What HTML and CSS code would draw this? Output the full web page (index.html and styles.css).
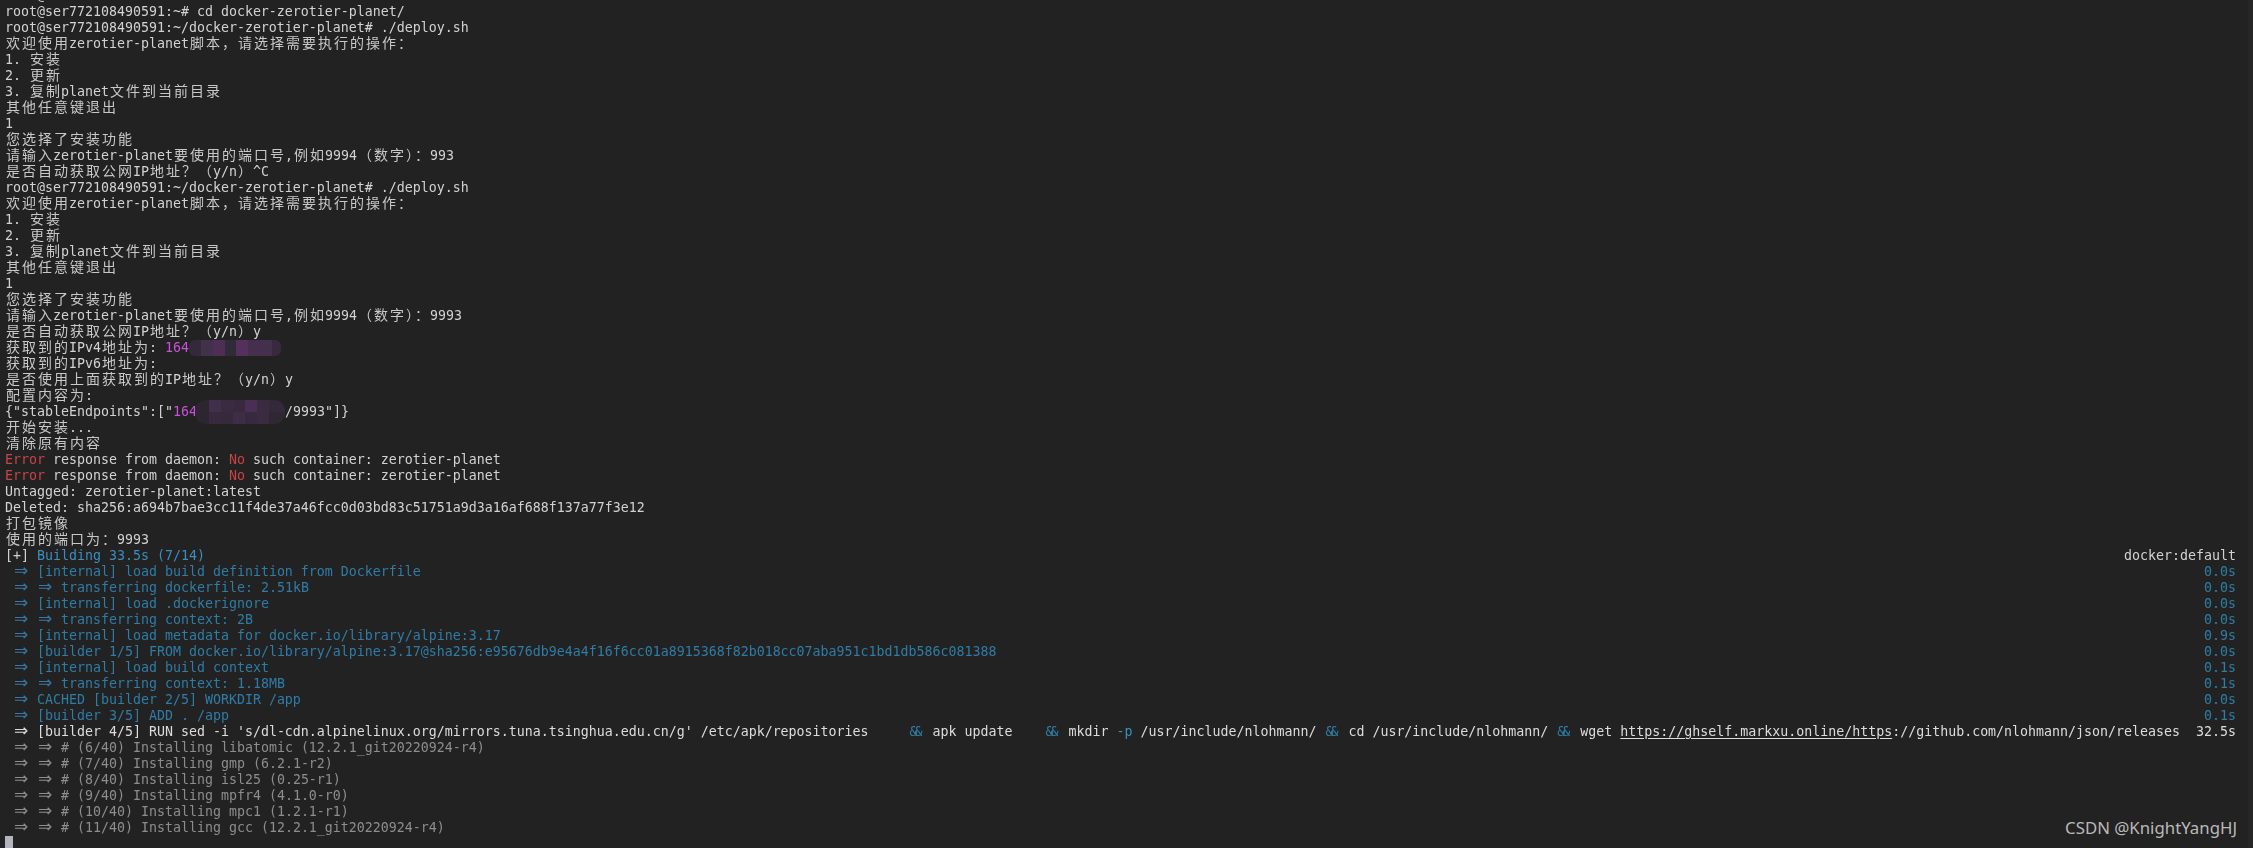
FILE: index.html
```html
<!DOCTYPE html>
<html lang="zh-CN">
<head>
<meta charset="utf-8">
<title>deploy.sh</title>
<link rel="stylesheet" href="styles.css">
</head>
<body>
<main class="term">
<div class="l">root@ser772108490591:~# ls</div>
<div class="l">root@ser772108490591:~# cd docker-zerotier-planet/</div>
<div class="l">root@ser772108490591:~/docker-zerotier-planet# ./deploy.sh</div>
<div class="l"><i class="c">欢迎使用</i>zerotier-planet<i class="c">脚本，请选择需要执行的操作：</i></div>
<div class="l">1. <i class="c">安装</i></div>
<div class="l">2. <i class="c">更新</i></div>
<div class="l">3. <i class="c">复制</i>planet<i class="c">文件到当前目录</i></div>
<div class="l"><i class="c">其他任意键退出</i></div>
<div class="l">1</div>
<div class="l"><i class="c">您选择了安装功能</i></div>
<div class="l"><i class="c">请输入</i>zerotier-planet<i class="c">要使用的端口号</i>,<i class="c">例如</i>9994<i class="c">（数字）：</i>993</div>
<div class="l"><i class="c">是否自动获取公网</i>IP<i class="c">地址？（</i>y/n<i class="c">）</i>^C</div>
<div class="l">root@ser772108490591:~/docker-zerotier-planet# ./deploy.sh</div>
<div class="l"><i class="c">欢迎使用</i>zerotier-planet<i class="c">脚本，请选择需要执行的操作：</i></div>
<div class="l">1. <i class="c">安装</i></div>
<div class="l">2. <i class="c">更新</i></div>
<div class="l">3. <i class="c">复制</i>planet<i class="c">文件到当前目录</i></div>
<div class="l"><i class="c">其他任意键退出</i></div>
<div class="l">1</div>
<div class="l"><i class="c">您选择了安装功能</i></div>
<div class="l"><i class="c">请输入</i>zerotier-planet<i class="c">要使用的端口号</i>,<i class="c">例如</i>9994<i class="c">（数字）：</i>9993</div>
<div class="l"><i class="c">是否自动获取公网</i>IP<i class="c">地址？（</i>y/n<i class="c">）</i>y</div>
<div class="l"><i class="c">获取到的</i>IPv4<i class="c">地址为</i>: <span class="p">164</span><span class="ip"><span class="mosaic m1"></span></span></div>
<div class="l"><i class="c">获取到的</i>IPv6<i class="c">地址为</i>:</div>
<div class="l"><i class="c">是否使用上面获取到的</i>IP<i class="c">地址？（</i>y/n<i class="c">）</i>y</div>
<div class="l"><i class="c">配置内容为</i>:</div>
<div class="l">{"stableEndpoints":["<span class="p">164</span><span class="ip"><span class="mosaic m2"></span></span>/9993"]}</div>
<div class="l"><i class="c">开始安装</i>...</div>
<div class="l"><i class="c">清除原有内容</i></div>
<div class="l"><span class="r">Error</span> response from daemon: <span class="r">No</span> such container: zerotier-planet</div>
<div class="l"><span class="r">Error</span> response from daemon: <span class="r">No</span> such container: zerotier-planet</div>
<div class="l">Untagged: zerotier-planet:latest</div>
<div class="l">Deleted: sha256:a694b7bae3cc11f4de37a46fcc0d03bd83c51751a9d3a16af688f137a77f3e12</div>
<div class="l"><i class="c">打包镜像</i></div>
<div class="l"><i class="c">使用的端口为：</i>9993</div>
<div class="l row"><span>[+] <span class="b">Building 33.5s (7/14)</span></span><span>docker:default</span></div>
<div class="l row b"><span> <b class="a">⇒</b> [internal] load build definition from Dockerfile</span><span>0.0s</span></div>
<div class="l row b"><span> <b class="a">⇒</b> <b class="a">⇒</b> transferring dockerfile: 2.51kB</span><span>0.0s</span></div>
<div class="l row b"><span> <b class="a">⇒</b> [internal] load .dockerignore</span><span>0.0s</span></div>
<div class="l row b"><span> <b class="a">⇒</b> <b class="a">⇒</b> transferring context: 2B</span><span>0.0s</span></div>
<div class="l row b"><span> <b class="a">⇒</b> [internal] load metadata for docker.io/library/alpine:3.17</span><span>0.9s</span></div>
<div class="l row b"><span> <b class="a">⇒</b> [builder 1/5] FROM docker.io/library/alpine:3.17@sha256:e95676db9e4a4f16f6cc01a8915368f82b018cc07aba951c1bd1db586c081388</span><span>0.0s</span></div>
<div class="l row b"><span> <b class="a">⇒</b> [internal] load build context</span><span>0.1s</span></div>
<div class="l row b"><span> <b class="a">⇒</b> <b class="a">⇒</b> transferring context: 1.18MB</span><span>0.1s</span></div>
<div class="l row b"><span> <b class="a">⇒</b> CACHED [builder 2/5] WORKDIR /app</span><span>0.0s</span></div>
<div class="l row b"><span> <b class="a">⇒</b> [builder 3/5] ADD . /app</span><span>0.1s</span></div>
<div class="l row w"><span> <b class="a">⇒</b> [builder 4/5] RUN sed -i 's/dl-cdn.alpinelinux.org/mirrors.tuna.tsinghua.edu.cn/g' /etc/apk/repositories     <b class="amp">&amp;&amp;</b> apk update    <b class="amp">&amp;&amp;</b> mkdir <span class="b2">-p</span> /usr/include/nlohmann/ <b class="amp">&amp;&amp;</b> cd /usr/include/nlohmann/ <b class="amp">&amp;&amp;</b> wget <u>https://ghself.markxu.online/https</u>://github.com/nlohmann/json/releases</span><span>32.5s</span></div>
<div class="l g"> <b class="a">⇒</b> <b class="a">⇒</b> # (6/40) Installing libatomic (12.2.1_git20220924-r4)</div>
<div class="l g"> <b class="a">⇒</b> <b class="a">⇒</b> # (7/40) Installing gmp (6.2.1-r2)</div>
<div class="l g"> <b class="a">⇒</b> <b class="a">⇒</b> # (8/40) Installing isl25 (0.25-r1)</div>
<div class="l g"> <b class="a">⇒</b> <b class="a">⇒</b> # (9/40) Installing mpfr4 (4.1.0-r0)</div>
<div class="l g"> <b class="a">⇒</b> <b class="a">⇒</b> # (10/40) Installing mpc1 (1.2.1-r1)</div>
<div class="l g"> <b class="a">⇒</b> <b class="a">⇒</b> # (11/40) Installing gcc (12.2.1_git20220924-r4)</div>
<div class="l"><span class="cursor"></span></div>
</main>
<div class="mark">CSDN @KnightYangHJ</div>
</body>
</html>
```
FILE: styles.css
```css
html, body {
  margin: 0;
  height: 848px;
  overflow: hidden;
  background: #222222;
}
body {
  position: relative;
  border-right: 5px solid #262626;
  box-sizing: border-box;
}
.term {
  margin-top: -12px;
  padding: 0 12px 0 5px;
  font-family: "DejaVu Sans Mono", "Liberation Mono", "Noto Sans CJK SC", monospace;
  font-size: 13.29px;
  line-height: 16px;
  color: #d2d2d2;
  filter: blur(0.35px);
}
.l {
  height: 16px;
  white-space: pre;
}
.row {
  display: flex;
  justify-content: space-between;
}
.c {
  font-family: "Noto Sans CJK SC", sans-serif;
  font-style: normal;
  font-size: 14px;
  letter-spacing: 2px;
  padding-left: 1px;
  margin-right: -1px;
  line-height: 0;
  color: #c8c8c8;
}
.p { color: #cb4fdc; }
.r { color: #c94444; }
.b { color: #2f7ca6; }
.l.row > span > .b { color: #3a8fbd; }
.b2 { color: #3a8fbd; }
.w { color: #dcdcdc; }
.g { color: #8d8d8d; }
.a {
  display: inline-block;
  width: 16px;
  text-align: center;
  font-family: "DejaVu Sans", sans-serif;
  font-weight: normal;
  font-size: 17px;
  line-height: 0;
}
.amp {
  display: inline-block;
  width: 16px;
  padding-left: 1px;
  box-sizing: border-box;
  font-weight: normal;
  letter-spacing: -3px;
  color: #2f7ca6;
}
u { text-underline-offset: 2px; }
.ip {
  display: inline-block;
  position: relative;
  width: 88px;
  height: 16px;
  vertical-align: top;
}
.mosaic {
  position: absolute;
  display: block;
}
.m1 {
  left: 0;
  top: 0;
  width: 92px;
  height: 16px;
  border-radius: 6px;
  background: linear-gradient(90deg,
    #34293a 0 12px, #43304b 12px 24px, #4d2f55 24px 36px, #312a38 36px 47px,
    #55305d 47px 59px, #462e4e 59px 71px, #43304b 71px 83px, #38293e 83px 92px);
}
.m2 {
  left: -2px;
  top: -4px;
  width: 90px;
  height: 24px;
  border-radius: 11px;
  background:
    linear-gradient(90deg,
      #2c2630 0 14px, #41304a 14px 26px, #3a2b41 26px 38px, #38293e 38px 50px,
      #4a2f54 50px 62px, #3a2b41 62px 74px, #34293a 74px 90px) top / 100% 12px no-repeat,
    linear-gradient(90deg,
      #2c2630 0 14px, #38293e 14px 26px, #36293c 26px 38px, #3f2d47 38px 50px,
      #38293e 50px 62px, #3a2b41 62px 74px, #2f2833 74px 90px) bottom / 100% 12px no-repeat;
}
.cursor {
  display: block;
  width: 8px;
  height: 16px;
  background: #b4b4bc;
}
.mark {
  position: absolute;
  right: 11px;
  top: 816px;
  font-family: "Noto Sans", "Liberation Sans", sans-serif;
  font-size: 16.8px;
  line-height: 24px;
  color: #b9b9b9;
}
```
